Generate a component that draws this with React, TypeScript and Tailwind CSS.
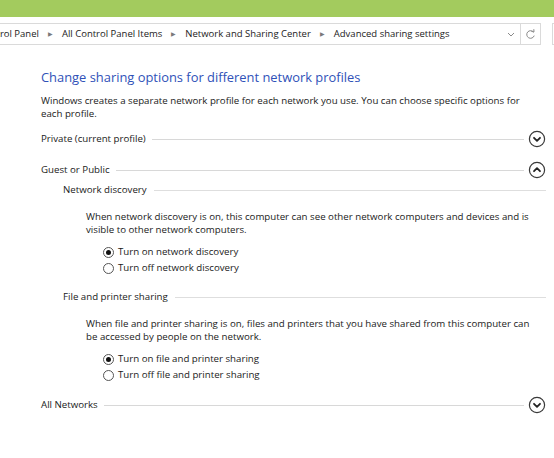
import React from "react";

const font = { fontFamily: '"Open Sans", "Noto Sans", Arial, sans-serif' };

function Crumb({ label }: { label: string }) {
  return (
    <>
      <span className="whitespace-nowrap">{label}</span>
      <span className="mx-[9px] text-[6px] text-[#7a7a7a]">&#9654;</span>
    </>
  );
}

function Chevron({ up }: { up?: boolean }) {
  return (
    <svg width="18" height="18" viewBox="0 0 18 18" className="shrink-0">
      <circle cx="9" cy="9" r="7.6" fill="none" stroke="#3a3a3a" strokeWidth="1.2" />
      <path
        d={up ? "M6 10.2 L9 7.2 L12 10.2" : "M6 7.8 L9 10.8 L12 7.8"}
        fill="none"
        stroke="#222"
        strokeWidth="1.8"
        strokeLinecap="round"
        strokeLinejoin="round"
      />
    </svg>
  );
}

function Heading({ label, up, className }: { label: string; up?: boolean; className?: string }) {
  return (
    <div className={"flex items-center h-[18px] " + (className ?? "")}>
      <span className="whitespace-nowrap">{label}</span>
      <div className="flex-1 h-px bg-[#d8d8d8] ml-[6px] mr-[4px]" />
      <Chevron up={up} />
    </div>
  );
}

function SubHeading({ label, className }: { label: string; className?: string }) {
  return (
    <div className={"flex items-center h-[16px] pl-[22px] " + (className ?? "")}>
      <span className="whitespace-nowrap">{label}</span>
      <div className="flex-1 h-px bg-[#dedede] ml-[7px]" />
    </div>
  );
}

function Radio({ label, checked }: { label: string; checked?: boolean }) {
  return (
    <label className="flex items-center h-[16px] pl-[62px]">
      <span className="w-[11px] h-[11px] rounded-full border border-[#555] bg-white flex items-center justify-center shrink-0">
        {checked && <span className="w-[5px] h-[5px] rounded-full bg-[#111]" />}
      </span>
      <span className="ml-[4px] whitespace-nowrap">{label}</span>
    </label>
  );
}

export default function App() {
  return (
    <div
      className="w-[554px] h-[458px] bg-white overflow-hidden text-[9.7px] text-[#1a1a1a]"
      style={font}
    >
      {/* title bar */}
      <div className="h-[17px] bg-[#a3cb5e]" />

      {/* address bar */}
      <div className="flex mt-[6px] h-[22px]">
        <div className="w-[541px] flex border-y border-r border-[#dadada]">
          <div className="flex-1 flex items-center overflow-hidden">
            <div className="flex items-center -ml-[21px] text-[9.5px] text-[#222]">
              <Crumb label="Control Panel" />
              <Crumb label="All Control Panel Items" />
              <Crumb label="Network and Sharing Center" />
              <span className="whitespace-nowrap">Advanced sharing settings</span>
            </div>
          </div>
          <div className="w-[18px] flex items-center justify-center">
            <svg width="8" height="5" viewBox="0 0 8 5">
              <path d="M1 1 L4 4 L7 1" fill="none" stroke="#8a8a8a" strokeWidth="1" />
            </svg>
          </div>
          <div className="w-[20px] border-l border-[#dadada] flex items-center justify-center">
            <svg width="11" height="12" viewBox="0 0 11 12">
              <path d="M8.6 4.2 A3.8 3.8 0 1 0 9.2 7.6" fill="none" stroke="#8a8a8a" strokeWidth="1" />
              <path d="M6.4 3.4 L9 3.9 L8.8 1.2" fill="none" stroke="#8a8a8a" strokeWidth="1" />
            </svg>
          </div>
        </div>
        <div className="ml-[11px] flex-1 border-l border-y border-[#dadada]" />
      </div>

      {/* content */}
      <div className="pl-[41px] pr-[8px] pt-[22px]">
        <h1 className="text-[12.9px] leading-[20px] text-[#2f51b8]">
          Change sharing options for different network profiles
        </h1>
        <p className="mt-[7px] leading-[13px] w-[495px]">
          Windows creates a separate network profile for each network you use. You can choose specific options for each profile.
        </p>

        <Heading label="Private (current profile)" className="mt-[10px]" />
        <Heading label="Guest or Public" up className="mt-[13px]" />

        <SubHeading label="Network discovery" className="mt-[3px]" />
        <p className="mt-[12px] pl-[45px] pr-[10px] leading-[13px]">
          When network discovery is on, this computer can see other network computers and devices and is visible to other network computers.
        </p>
        <div className="mt-[8px]">
          <Radio label="Turn on network discovery" checked />
          <Radio label="Turn off network discovery" />
        </div>

        <SubHeading label="File and printer sharing" className="mt-[13px]" />
        <p className="mt-[12px] pl-[45px] pr-[10px] leading-[13px]">
          When file and printer sharing is on, files and printers that you have shared from this computer can be accessed by people on the network.
        </p>
        <div className="mt-[8px]">
          <Radio label="Turn on file and printer sharing" checked />
          <Radio label="Turn off file and printer sharing" />
        </div>

        <Heading label="All Networks" className="mt-[13px]" />
      </div>
    </div>
  );
}
